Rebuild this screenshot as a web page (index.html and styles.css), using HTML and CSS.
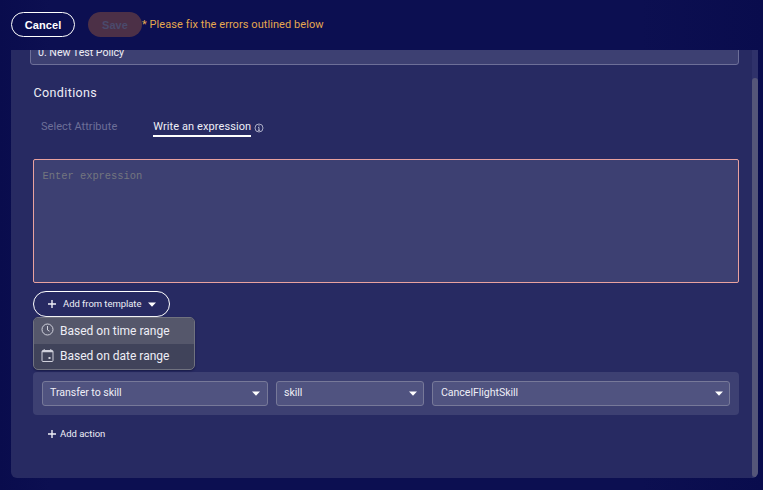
FILE: index.html
```
<!DOCTYPE html>
<html lang="en">
<head>
<meta charset="utf-8">
<title>Policy editor</title>
<link rel="stylesheet" href="styles.css">
</head>
<body>
<header class="toolbar">
  <button class="btn btn-cancel">Cancel</button>
  <button class="btn btn-save" disabled>Save</button>
  <span class="form-error">* Please fix the errors outlined below</span>
</header>
<main class="panel">
  <div class="content">
    <div class="name-field"><span>0. New Test Policy</span></div>
    <h2 class="heading">Conditions</h2>
    <nav class="tabs">
      <span class="tab">Select Attribute</span>
      <span class="tab tab-active">Write an expression</span>
      <svg class="info" viewBox="0 0 10 10" fill="none" stroke="currentColor"><circle cx="5" cy="5" r="4" stroke-width=".9"/><path d="M5 2.2v1.2M4.1 4.5H5v2.8M3.9 7.3h2.2" stroke-width="1"/></svg>
    </nav>
    <textarea class="expression" placeholder="Enter expression"></textarea>
    <div class="template">
      <button class="template-btn">
        <svg class="plus" viewBox="0 0 8 8" stroke="currentColor" stroke-width="1.4"><path d="M4 0v8M0 4h8"/></svg>
        <span class="template-label">Add from template</span>
        <svg class="caret" viewBox="0 0 8 5" fill="currentColor"><path d="M0 .5h8L4 4.7z"/></svg>
      </button>
      <div class="menu">
        <div class="menu-item menu-item-hover">
          <svg class="menu-icon" viewBox="0 0 13 13" fill="none" stroke="currentColor"><circle cx="6.5" cy="6.5" r="5.5"/><path d="M6.5 3v4l2 1.2"/></svg>
          <span>Based on time range</span>
        </div>
        <div class="menu-item">
          <svg class="menu-icon" viewBox="0 0 13 13" fill="none" stroke="currentColor"><rect x="1" y="1.5" width="11" height="11" rx="1"/><path d="M1 2.5h11" stroke-width="1.6"/><path d="M3.2 0v1.5M9.8 0v1.5"/><path d="M7.5 9h2" stroke-width="2"/></svg>
          <span>Based on date range</span>
        </div>
      </div>
    </div>
    <div class="action-row">
      <div class="select"><span>Transfer to skill</span><svg class="caret" viewBox="0 0 8 5" fill="currentColor"><path d="M0 .5h8L4 4.7z"/></svg></div>
      <div class="select"><span>skill</span><svg class="caret" viewBox="0 0 8 5" fill="currentColor"><path d="M0 .5h8L4 4.7z"/></svg></div>
      <div class="select select-target"><span>CancelFlightSkill</span><svg class="caret" viewBox="0 0 8 5" fill="currentColor"><path d="M0 .5h8L4 4.7z"/></svg></div>
    </div>
    <button class="add-action">
      <svg class="plus" viewBox="0 0 8 8" stroke="currentColor" stroke-width="1.4"><path d="M4 0v8M0 4h8"/></svg>
      <span>Add action</span>
    </button>
  </div>
  <div class="scrollbar"><div class="thumb"></div></div>
</main>
</body>
</html>
```
FILE: styles.css
```
* { box-sizing: border-box; }
body {
  margin: 0;
  height: 490px;
  overflow: hidden;
  background: linear-gradient(90deg, #090c4d 0, #0c0f51 50px, #0c0f51 640px, #090c4d 763px);
  color: #eeeef6;
  font: 11px/14px Roboto, sans-serif;
}
button { margin: 0; padding: 0; border: 0; background: none; color: inherit; font: inherit; }
.toolbar { display: flex; height: 50px; padding: 12px 11px 0; align-items: flex-start; }
.btn { height: 25px; border-radius: 13px; font: bold 11px/24px "Liberation Sans", Arial, sans-serif; letter-spacing: .1px; }
.btn-cancel { width: 64px; margin-right: 13px; border: 1.5px solid #fff; color: #fff; }
.btn-save { width: 54px; background: #4c3047; color: #4a4a6c; }
.form-error { color: #e5a84f; line-height: 25px; letter-spacing: .07px; }
.panel {
  display: flex;
  width: 747px;
  height: 428px;
  margin-left: 11px;
  overflow: hidden;
  border-radius: 0 0 6px 6px;
  background: #272a62;
}
.content { flex: 1; padding: 0 13px 0 22px; }
.name-field {
  display: flex;
  align-items: flex-end;
  height: 26px;
  margin: -11px 0 0 -3px;
  padding: 0 7px 4px;
  border: 1px solid #6d6f98;
  border-radius: 3px;
  background: #3d4072;
  font-size: 10.6px;
  letter-spacing: -.01px;
}
.heading { margin: 20px 0 0 .5px; font-size: 12.5px; font-weight: 400; line-height: 16px; letter-spacing: .38px; }
.tabs { display: flex; height: 18px; margin: 18px 0 22px 8px; }
.tab { height: 18px; line-height: 16px; letter-spacing: .06px; color: #6d6f98; }
.tab-active { margin-left: 36px; border-bottom: 2px solid #fff; color: #eeeef6; letter-spacing: .09px; }
.info { width: 10px; height: 10px; margin: 4px 0 0 3px; color: #b7b8cf; }
.expression {
  display: block;
  width: 706px;
  height: 124px;
  padding: 10px 8.5px;
  resize: none;
  border: 1px solid #e9a29f;
  border-radius: 2px;
  background: #3d4072;
  color: #eeeef6;
  font: 10.4px/13px "Liberation Mono", monospace;
}
.expression::placeholder { color: #74767f; opacity: 1; }
.template { position: relative; width: 137px; margin-top: 8px; }
.template-btn {
  display: flex;
  align-items: center;
  width: 137px;
  height: 26px;
  padding-left: 14px;
  border: 1px solid #fff;
  border-radius: 13px;
  font: 9.5px/12px Roboto, sans-serif;
  letter-spacing: -.05px;
}
.plus { width: 8px; height: 8px; }
.template-label { margin: 0 6.5px 0 7px; }
.caret { flex: none; width: 8px; height: 5px; color: #fff; }
.menu {
  position: absolute;
  z-index: 1;
  top: 26px;
  left: 0;
  width: 162px;
  height: 53px;
  overflow: hidden;
  border: 1px solid #70727f;
  border-radius: 5px;
  background: #40435a;
  box-shadow: 0 1px 2px #181a45;
  font-size: 12px;
  letter-spacing: 0;
}
.menu-item { display: flex; align-items: center; height: 25.5px; padding-left: 7px; }
.menu-item-hover { background: #55576b; }
.menu-icon { width: 13px; height: 13px; margin: -2px 6px 0 0; color: #d0d1dc; }
.action-row {
  display: grid;
  grid-template-columns: 226px 148px 298px;
  gap: 8px;
  height: 43px;
  margin-top: 55px;
  padding: 9px;
  border-radius: 4px;
  background: #3d4072;
}
.select {
  display: flex;
  align-items: center;
  justify-content: space-between;
  padding: 0 7px;
  border: 1px solid #777999;
  border-radius: 3px;
  background: #505380;
  font-size: 10.6px;
  line-height: 13px;
  letter-spacing: -.05px;
}
.select span { margin-top: -2px; }
.select + .select { padding-right: 6px; }
.select-target { padding-left: 8px; }
.add-action { display: flex; align-items: center; gap: 4px; margin: 12px 0 0 15px; font: 9.5px/14px Roboto, sans-serif; letter-spacing: -.02px; }
.scrollbar { width: 6px; padding-top: 28px; background: #2f326a; }
.thumb { height: 399px; border-radius: 3px; background: #555679; }
```
